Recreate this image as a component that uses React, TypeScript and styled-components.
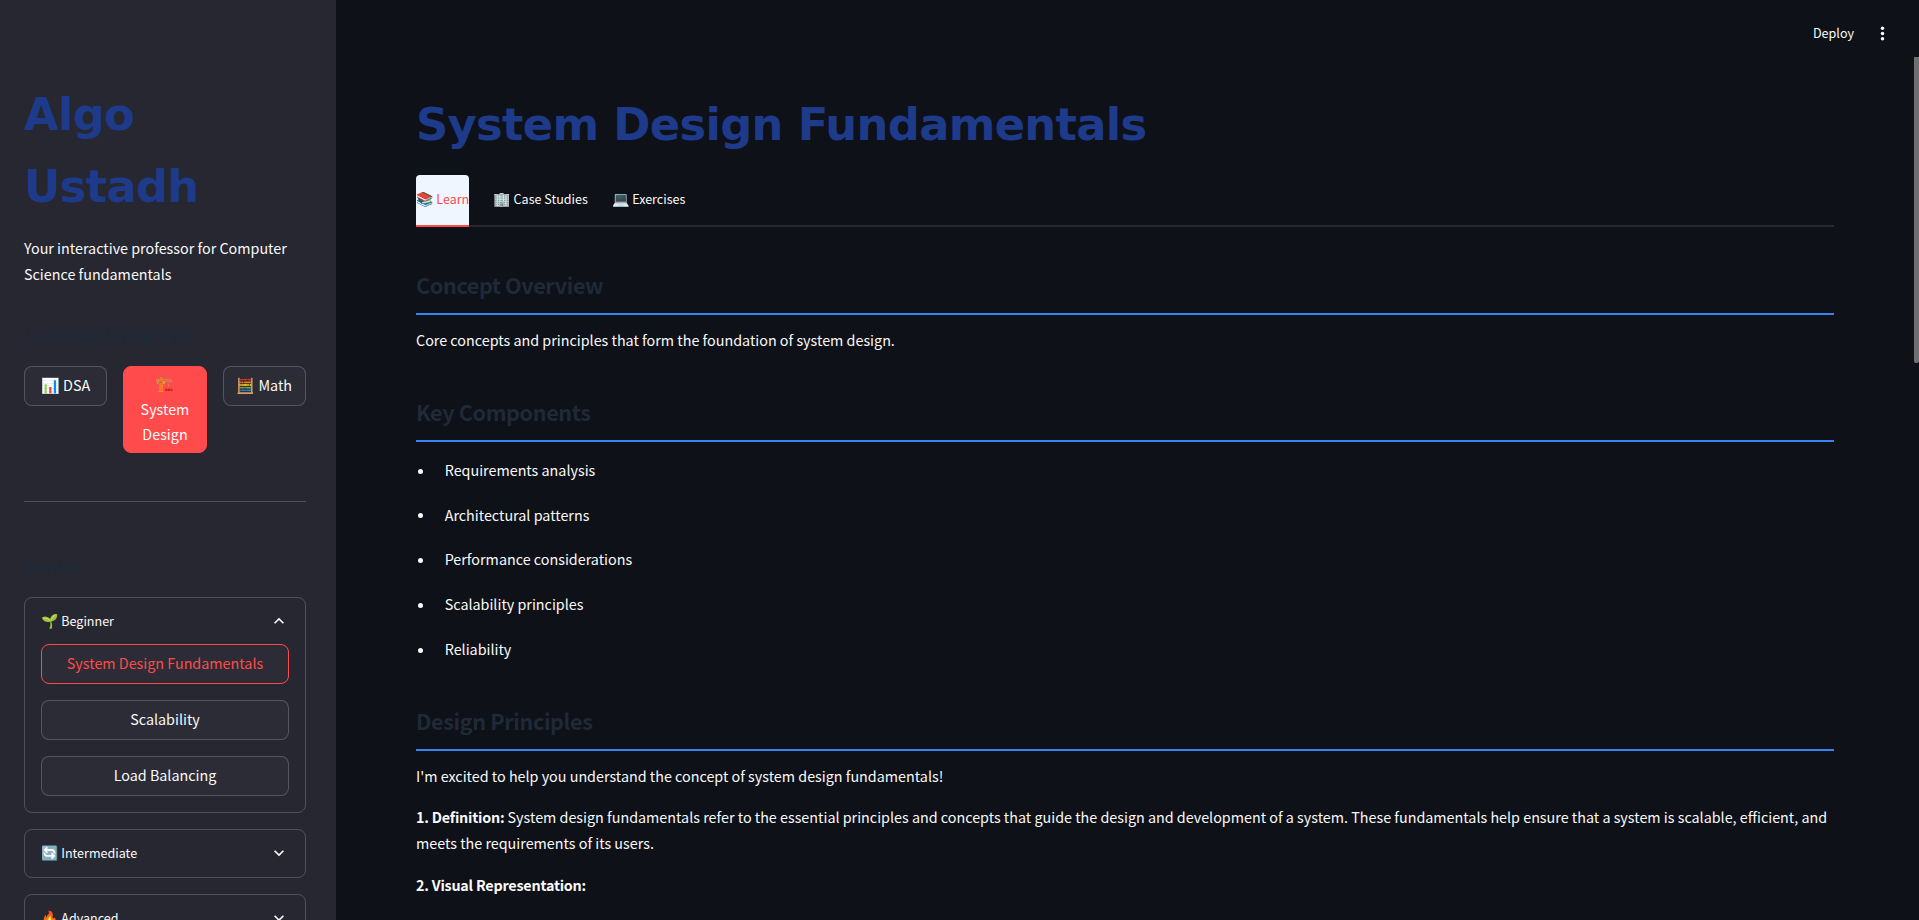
import React from "react";
import styled, { createGlobalStyle } from "styled-components";

const GlobalStyle = createGlobalStyle`
  * { box-sizing: border-box; }
  html, body { margin: 0; background: #0e1117; overflow: hidden; }
  body {
    font-family: "Noto Sans CJK SC", "Noto Sans", sans-serif;
    font-size: 14.335px;
    line-height: 25.6px;
    color: #fafafa;
  }
  h1, h2, h3, p, ul { margin: 0; padding: 0; }
  button { font: inherit; color: inherit; }
  strong { letter-spacing: -0.21px; }
`;

const Page = styled.div`
  display: flex;
  height: 920px;
  overflow: hidden;
`;

const Sidebar = styled.aside`
  flex: 0 0 336px;
  height: 920px;
  padding: 79px 30px 0 24px;
  background: #262730;
  overflow: hidden;
`;

const Title = styled.h1`
  font-family: "DejaVu Sans", sans-serif;
  font-weight: 700;
  font-size: 44.8px;
  line-height: 71.68px;
  letter-spacing: -0.69px;
  color: #1e3a8a;
`;

const Tagline = styled.p`
  margin-top: 12.6px;
`;

const SideHeading = styled.h3<{ $top: number }>`
  margin-top: ${(p) => p.$top}px;
  font-size: 18px;
  font-weight: 600;
  line-height: 28px;
  letter-spacing: -0.3px;
  color: #1f2937;
`;

const CategoryRow = styled.div`
  display: grid;
  grid-template-columns: repeat(3, 1fr);
  gap: 16px;
  align-items: start;
  height: 87px;
  margin-top: 18px;
`;

const Button = styled.button<{ $kind?: "primary" | "active" }>`
  width: 100%;
  min-height: 40px;
  padding: 3px 6px 5px;
  border-radius: 8px;
  border: 1px solid ${(p) => (p.$kind ? "#ff4b4b" : "rgba(250, 250, 250, 0.2)")};
  background: ${(p) => (p.$kind === "primary" ? "#ff4b4b" : "#2b2c36")};
  color: ${(p) => (p.$kind === "active" ? "#ff4b4b" : "#fafafa")};
  text-align: center;
`;

const Emoji = styled.span<{ $size: number }>`
  font-family: "Noto Color Emoji", sans-serif;
  font-size: ${(p) => p.$size}px;
  line-height: 1;
`;

const Divider = styled.hr`
  height: 1px;
  margin: 48px 0 0;
  border: 0;
  background: rgba(250, 250, 250, 0.2);
`;

const Expander = styled.section`
  margin-bottom: 16px;
  border: 1px solid rgba(250, 250, 250, 0.2);
  border-radius: 8px;
`;

const ExpanderHeader = styled.div<{ $open?: boolean }>`
  display: flex;
  align-items: center;
  justify-content: space-between;
  height: ${(p) => (p.$open ? 46 : 47)}px;
  padding: 0 16px 1px;
  font-size: 12.55px;
`;

const ExpanderBody = styled.div`
  display: flex;
  flex-direction: column;
  gap: 16px;
  padding: 0 16px 16px;
`;

const TopicList = styled.div`
  margin-top: 18px;
`;

const Main = styled.main`
  position: relative;
  flex: 1;
  height: 920px;
  padding: 0 85px 0 80px;
  overflow: hidden;
`;

const Toolbar = styled.header`
  display: flex;
  align-items: center;
  justify-content: flex-end;
  gap: 18px;
  height: 66px;
  margin: 0 -59px 23px 0;
  font-size: 12.55px;
`;

const Tabs = styled.nav`
  display: flex;
  gap: 24.1px;
  height: 52px;
  margin-top: 14.3px;
  border-bottom: 2px solid #27282d;
`;

const Tab = styled.div<{ $active?: boolean }>`
  height: 52px;
  padding-top: 11px;
  font-size: 12.55px;
  white-space: nowrap;
  border-radius: 4px 4px 0 0;
  border-bottom: 2px solid ${(p) => (p.$active ? "#ff4b4b" : "transparent")};
  background: ${(p) => (p.$active ? "#eff6ff" : "transparent")};
  color: ${(p) => (p.$active ? "#ff4b4b" : "#fafafa")};
`;

const SectionHeading = styled.h2<{ $top: number }>`
  height: 48px;
  margin-top: ${(p) => p.$top}px;
  border-bottom: 2px solid #3b82f6;
  font-size: 21.6px;
  font-weight: 600;
  line-height: 35.5px;
  letter-spacing: -0.38px;
  color: #1f2937;
`;

const Paragraph = styled.p<{ $top: number }>`
  margin-top: ${(p) => p.$top}px;
`;

const Bullets = styled.ul`
  margin-top: 15.2px;
  list-style: none;
`;

const Bullet = styled.li`
  display: flex;
  align-items: center;
  height: 44.8px;
  padding: 0 0 19.2px 2px;

  &::before {
    content: "";
    width: 5px;
    height: 5px;
    margin: 3px 21.7px 0 0;
    border-radius: 50%;
    background: #fafafa;
  }
`;

const ScrollThumb = styled.div`
  position: absolute;
  top: 57px;
  right: 0;
  width: 5px;
  height: 306px;
  border-radius: 0 0 2px 2px;
  background: #6f6f72;
`;

function Chevron({ up }: { up?: boolean }) {
  return (
    <svg width="20" height="20" viewBox="0 0 24 24" fill="#fafafa">
      <path
        d={
          up
            ? "M12 8l-6 6 1.41 1.41L12 10.83l4.59 4.58L18 14z"
            : "M16.59 8.59 12 13.17 7.41 8.59 6 10l6 6 6-6z"
        }
      />
    </svg>
  );
}

const components = [
  "Requirements analysis",
  "Architectural patterns",
  "Performance considerations",
  "Scalability principles",
  "Reliability",
];

export default function App() {
  return (
    <Page>
      <GlobalStyle />
      <Sidebar>
        <Title>Algo Ustadh</Title>
        <Tagline>Your interactive professor for Computer Science fundamentals</Tagline>
        <SideHeading $top={34}>Learning Categories</SideHeading>
        <CategoryRow>
          <Button><Emoji $size={15}>📊</Emoji> DSA</Button>
          <Button $kind="primary"><Emoji $size={15}>🏗️</Emoji> System Design</Button>
          <Button><Emoji $size={15}>🧮</Emoji> Math</Button>
        </CategoryRow>
        <Divider />
        <SideHeading $top={49}>Topics</SideHeading>
        <TopicList>
          <Expander>
            <ExpanderHeader $open>
              <span><Emoji $size={14}>🌱</Emoji> Beginner</span>
              <Chevron up />
            </ExpanderHeader>
            <ExpanderBody>
              <Button $kind="active">System Design Fundamentals</Button>
              <Button>Scalability</Button>
              <Button>Load Balancing</Button>
            </ExpanderBody>
          </Expander>
          <Expander>
            <ExpanderHeader>
              <span><Emoji $size={14}>🔄</Emoji> Intermediate</span>
              <Chevron />
            </ExpanderHeader>
          </Expander>
          <Expander>
            <ExpanderHeader>
              <span><Emoji $size={14}>🔥</Emoji> Advanced</span>
              <Chevron />
            </ExpanderHeader>
          </Expander>
        </TopicList>
      </Sidebar>
      <Main>
        <Toolbar>
          <span>Deploy</span>
          <svg width="21" height="21" viewBox="0 0 24 24" fill="#fafafa">
            <circle cx="12" cy="6" r="2" />
            <circle cx="12" cy="12" r="2" />
            <circle cx="12" cy="18" r="2" />
          </svg>
        </Toolbar>
        <Title>System Design Fundamentals</Title>
        <Tabs>
          <Tab $active><Emoji $size={14}>📚</Emoji> Learn</Tab>
          <Tab><Emoji $size={14}>🏢</Emoji> Case Studies</Tab>
          <Tab><Emoji $size={14}>💻</Emoji> Exercises</Tab>
        </Tabs>
        <SectionHeading $top={40}>Concept Overview</SectionHeading>
        <Paragraph $top={12}>Core concepts and principles that form the foundation of system design.</Paragraph>
        <SectionHeading $top={41}>Key Components</SectionHeading>
        <Bullets>
          {components.map((c) => (
            <Bullet key={c}>{c}</Bullet>
          ))}
        </Bullets>
        <SectionHeading $top={22.25}>Design Principles</SectionHeading>
        <Paragraph $top={12}>I'm excited to help you understand the concept of system design fundamentals!</Paragraph>
        <Paragraph $top={15.6}>
          <strong>1. Definition:</strong> System design fundamentals refer to the essential principles and concepts that
          guide the design and development of a system. These fundamentals help ensure that a system is scalable,
          efficient, and meets the requirements of its users.
        </Paragraph>
        <Paragraph $top={16.4}><strong>2. Visual Representation:</strong></Paragraph>
        <ScrollThumb />
      </Main>
    </Page>
  );
}
